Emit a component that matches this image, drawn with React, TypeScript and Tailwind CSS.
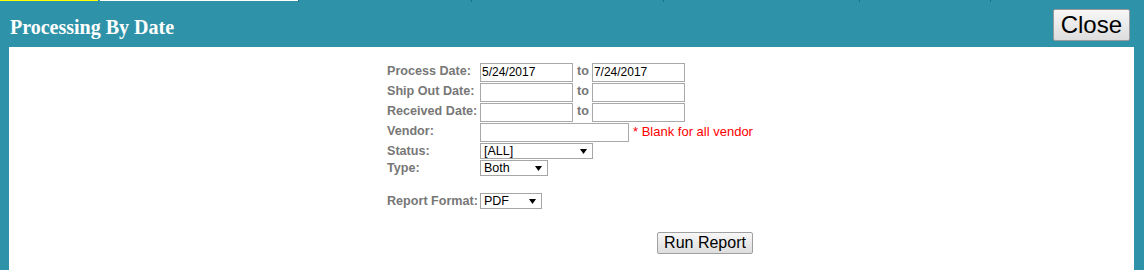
import React from "react";

const Arrow = () => (
  <svg width="7" height="5" viewBox="0 0 7 5" className="shrink-0">
    <path d="M0 0 L7 0 L3.5 5 Z" fill="#000" />
  </svg>
);

function Select({ value, width }: { value: string; width: string }) {
  return (
    <div
      className={`${width} h-[16px] border border-[#a6a6a6] bg-white flex items-center justify-between pl-[3px] pr-[5px] text-[12.5px] leading-[14px] text-black`}
    >
      <span>{value}</span>
      <Arrow />
    </div>
  );
}

function Input({ value, width }: { value?: string; width: string }) {
  return (
    <div
      className={`${width} h-[19px] border border-[#a9a9a9] bg-white px-[1px] text-[12px] leading-[17px] text-black`}
    >
      {value}
    </div>
  );
}

const Label = ({ children }: { children: React.ReactNode }) => (
  <div className="w-[93px] shrink-0 pt-[1px] text-[12.6px] leading-[14px] font-bold text-[#777777] whitespace-nowrap">
    {children}
  </div>
);

const To = () => (
  <div className="pl-[4px] pr-[3px] pt-[1px] text-[12.6px] leading-[14px] font-bold text-[#777777]">to</div>
);

export default function App() {
  return (
    <div
      className="w-[1144px] h-[270px] bg-[#2e93a8] flex flex-col overflow-hidden"
      style={{ fontFamily: '"Liberation Sans", Arial, sans-serif' }}
    >
      {/* top strip */}
      <div className="h-[2px] flex items-start shrink-0">
        <div className="w-[98px] h-[1px] bg-[#ffff00]" />
        <div className="w-[2px]" />
        <div className="w-[198px] h-[1px] bg-white" />
        <div className="w-[1px] h-[2px] bg-[#1b6f8a]" />
        <div className="w-[172px]" />
        <div className="w-[1px] h-[2px] bg-[#1b6f8a]" />
        <div className="w-[191px]" />
        <div className="w-[1px] h-[2px] bg-[#1b6f8a]" />
        <div className="w-[195px]" />
        <div className="w-[1px] h-[2px] bg-[#1b6f8a]" />
        <div className="w-[130px]" />
        <div className="w-[1px] h-[2px] bg-[#1b6f8a]" />
      </div>

      {/* header */}
      <div className="h-[45px] shrink-0 flex items-center justify-between pl-[10px] pr-[14px]">
        <div
          className="mt-[4px] text-white font-bold text-[20px] leading-[22px]"
          style={{ fontFamily: '"Liberation Serif", "Times New Roman", serif' }}
        >
          Processing By Date
        </div>
        <button className="mt-[1px] h-[32px] px-[7px] border border-[#9a9a9a] rounded-[2px] bg-gradient-to-b from-[#f7f7f7] to-[#dddddd] text-[24px] leading-[28px] text-black">
          Close
        </button>
      </div>

      {/* panel */}
      <div className="flex-1 ml-[9px] mr-[10px] bg-white flex justify-center pt-[16px]">
        <div className="w-[369px] flex flex-col">
          <div className="h-[20px] flex items-start">
            <Label>Process Date:</Label>
            <Input value="5/24/2017" width="w-[93px]" />
            <To />
            <Input value="7/24/2017" width="w-[93px]" />
          </div>
          <div className="h-[20px] flex items-start">
            <Label>Ship Out Date:</Label>
            <Input width="w-[93px]" />
            <To />
            <Input width="w-[93px]" />
          </div>
          <div className="h-[20px] flex items-start">
            <Label>Received Date:</Label>
            <Input width="w-[93px]" />
            <To />
            <Input width="w-[93px]" />
          </div>
          <div className="h-[20px] flex items-start">
            <Label>Vendor:</Label>
            <Input width="w-[149px]" />
            <div className="pl-[4px] pt-[1px] text-[13px] leading-[15px] text-[#ff0000] whitespace-nowrap">
              * Blank for all vendor
            </div>
          </div>
          <div className="h-[17px] flex items-start">
            <Label>Status:</Label>
            <Select value="[ALL]" width="w-[113px]" />
          </div>
          <div className="h-[17px] flex items-start">
            <Label>Type:</Label>
            <Select value="Both" width="w-[68px]" />
          </div>
          <div className="h-[16px]" />
          <div className="h-[17px] flex items-start">
            <Label>Report Format:</Label>
            <Select value="PDF" width="w-[62px]" />
          </div>
          <div className="pt-[21px] pl-[270px]">
            <button className="w-[96px] h-[22px] border border-[#a0a0a0] rounded-[2px] bg-gradient-to-b from-[#f7f7f7] to-[#dddddd] text-[16px] leading-[18px] text-black whitespace-nowrap">
              Run Report
            </button>
          </div>
        </div>
      </div>
    </div>
  );
}
